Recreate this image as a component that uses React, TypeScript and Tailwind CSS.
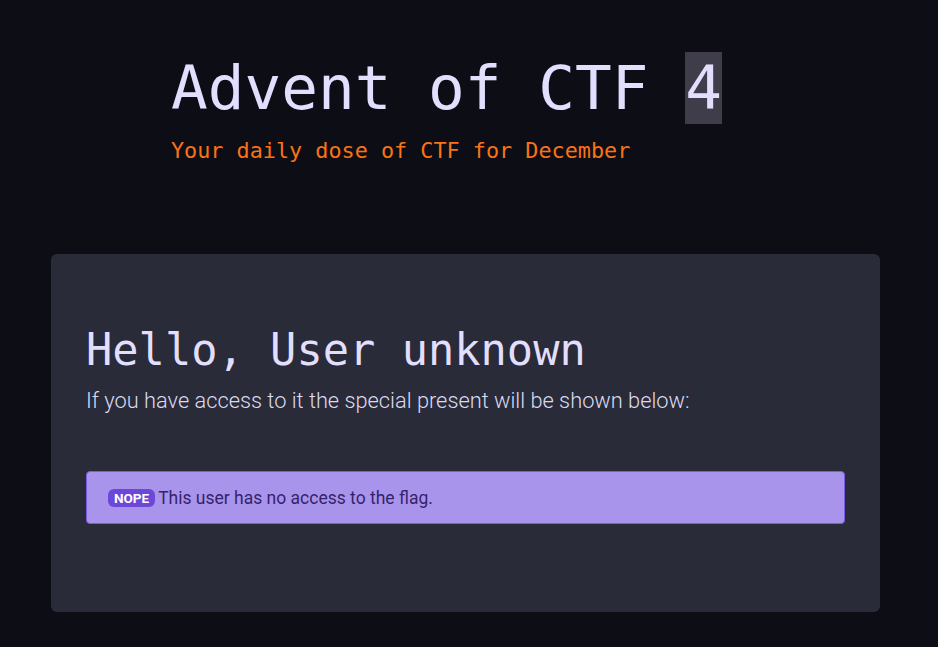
export default function App() {
  return (
    <div className="min-h-[647px] bg-[#0d0d16] overflow-hidden">
      {/* Header */}
      <header className="pl-[171px] pt-[52px]">
        <h1 className="flex items-center text-[61px] leading-[72px] text-[#e2defd] font-['DejaVu_Sans_Mono',monospace]">
          <span className="whitespace-pre">Advent of CTF </span>
          <span className="bg-[#3e3d49] w-[37px] h-[72px] flex items-center justify-center">
            4
          </span>
        </h1>
        <p className="mt-[13px] text-[21.8px] leading-[28px] text-[#f97316] font-['DejaVu_Sans_Mono',monospace]">
          Your daily dose of CTF for December
        </p>
      </header>

      {/* Card */}
      <main className="ml-[51px] mt-[89px] w-[829px] h-[358px] rounded-md bg-[#2a2b38] px-[35px] pt-[70px]">
        <h2 className="text-[43.7px] leading-[52px] text-[#e2defd] font-['DejaVu_Sans_Mono',monospace]">
          Hello, User unknown
        </h2>
        <p className="mt-[11px] text-[21.8px] leading-[28px] font-light text-[#dcdaf2] font-['Roboto',sans-serif]">
          If you have access to it the special present will be shown below:
        </p>

        <div className="mt-[56px] h-[53px] flex items-center gap-[3px] rounded border border-[#7b5be6] bg-[#a994ec] pl-[21px] pr-[22px] pt-[1px]">
          <span className="rounded-md bg-[#6d48d8] px-[6px] h-[18px] flex items-center text-[13.5px] font-bold text-white font-['Roboto',sans-serif]">
            NOPE
          </span>
          <span className="text-[17.5px] text-[#35236a] font-['Roboto',sans-serif]">
            This user has no access to the flag.
          </span>
        </div>
      </main>
    </div>
  );
}
